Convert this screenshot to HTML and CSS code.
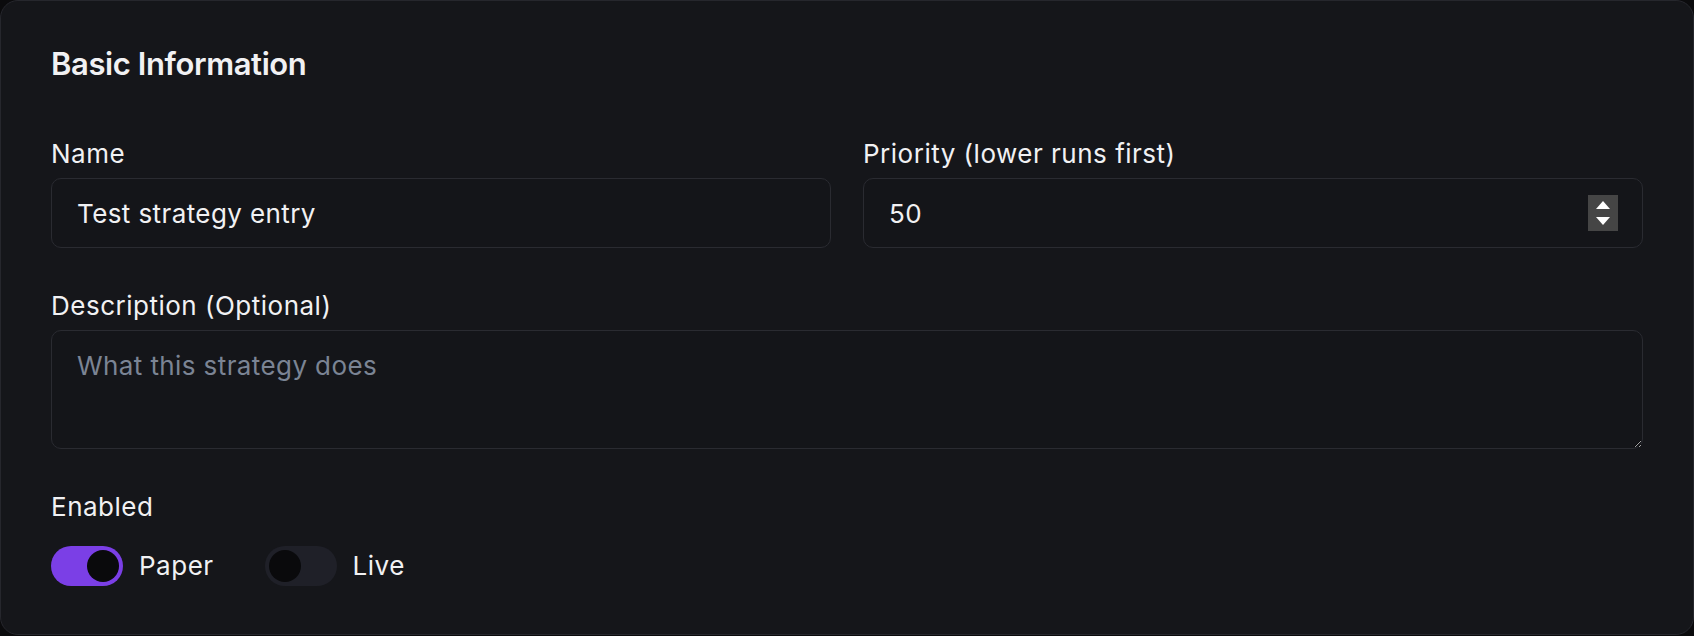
FILE: index.html
```html
<!DOCTYPE html>
<html lang="en">
<head>
    <meta charset="UTF-8">
    <meta name="viewport" content="width=device-width, initial-scale=1.0">
    <title>Strategy - Basic Information</title>
    <link rel="stylesheet" href="styles.css">
</head>
<body>
    <section class="card">
        <h2 class="card-title">Basic Information</h2>

        <div class="row">
            <div class="field">
                <label for="name">Name</label>
                <input type="text" id="name" class="input" value="Test strategy entry">
            </div>
            <div class="field">
                <label for="priority">Priority (lower runs first)</label>
                <div class="input number-box">
                    <input type="number" id="priority" class="number-input" value="50">
                    <span class="spinner">
                        <svg width="14" height="24" viewBox="0 0 14 24">
                            <polygon points="7,0 14,8 0,8" fill="#fff"/>
                            <polygon points="0,16 14,16 7,24" fill="#fff"/>
                        </svg>
                    </span>
                </div>
            </div>
        </div>

        <div class="field">
            <label for="description">Description (Optional)</label>
            <textarea id="description" class="input textarea" placeholder="What this strategy does"></textarea>
        </div>

        <div class="field last">
            <span class="label">Enabled</span>
            <div class="toggles">
                <label class="toggle">
                    <span class="switch on"><span class="knob"></span></span>
                    Paper
                </label>
                <label class="toggle">
                    <span class="switch"><span class="knob"></span></span>
                    Live
                </label>
            </div>
        </div>
    </section>
</body>
</html>
```

FILE: styles.css
```css
* {
    box-sizing: border-box;
}
body {
    margin: 0;
    background-color: #0b0b0d;
    color: #f1f1f3;
    font-family: Inter, "Noto Sans", sans-serif;
}
.card {
    background-color: #15161a;
    border: 1px solid #26272d;
    border-radius: 18px;
    padding: 43px 50px 48px;
}
.card-title {
    margin: 0 0 54px;
    font-size: 31px;
    line-height: 40px;
    font-weight: 600;
    letter-spacing: -0.4px;
}
.row {
    display: grid;
    grid-template-columns: 1fr 1fr;
    gap: 32px;
}
.field {
    display: flex;
    flex-direction: column;
    gap: 8px;
    margin-bottom: 42px;
}
.field.last {
    margin-bottom: 0;
}
.field label,
.label {
    font-size: 26px;
    line-height: 32px;
    letter-spacing: 0.5px;
    color: #f1f1f3;
}
.input {
    height: 70px;
    width: 100%;
    background-color: #141519;
    border: 1px solid #2a2b31;
    border-radius: 10px;
    padding: 0 25px;
    color: #f1f1f3;
    font-family: inherit;
    font-size: 26px;
    letter-spacing: 0.4px;
    outline: none;
}
.number-box {
    display: flex;
    align-items: center;
    padding-right: 24px;
}
.number-input {
    flex: 1;
    min-width: 0;
    background: transparent;
    border: none;
    outline: none;
    color: #f1f1f3;
    font-family: inherit;
    font-size: 26px;
    letter-spacing: 0.4px;
    padding: 0;
    -moz-appearance: textfield;
}
.number-input::-webkit-inner-spin-button,
.number-input::-webkit-outer-spin-button {
    -webkit-appearance: none;
    margin: 0;
}
.spinner {
    width: 30px;
    height: 36px;
    background-color: #454545;
    display: flex;
    align-items: center;
    justify-content: center;
}
.textarea {
    height: 119px;
    padding: 19px 25px;
    line-height: 32px;
    resize: vertical;
    color-scheme: dark;
}
.textarea::placeholder {
    color: #7b8494;
}
.toggles {
    display: flex;
    align-items: center;
    gap: 51px;
    margin-top: 15px;
}
.field .toggle {
    display: flex;
    align-items: center;
    gap: 16px;
    cursor: pointer;
}
.switch {
    width: 72px;
    height: 40px;
    border-radius: 20px;
    background-color: #1f2028;
    padding: 4px;
    display: flex;
}
.switch.on {
    background-color: #7b3fe6;
    justify-content: flex-end;
}
.knob {
    width: 32px;
    height: 32px;
    border-radius: 50%;
    background-color: #0a0a0c;
}
```
